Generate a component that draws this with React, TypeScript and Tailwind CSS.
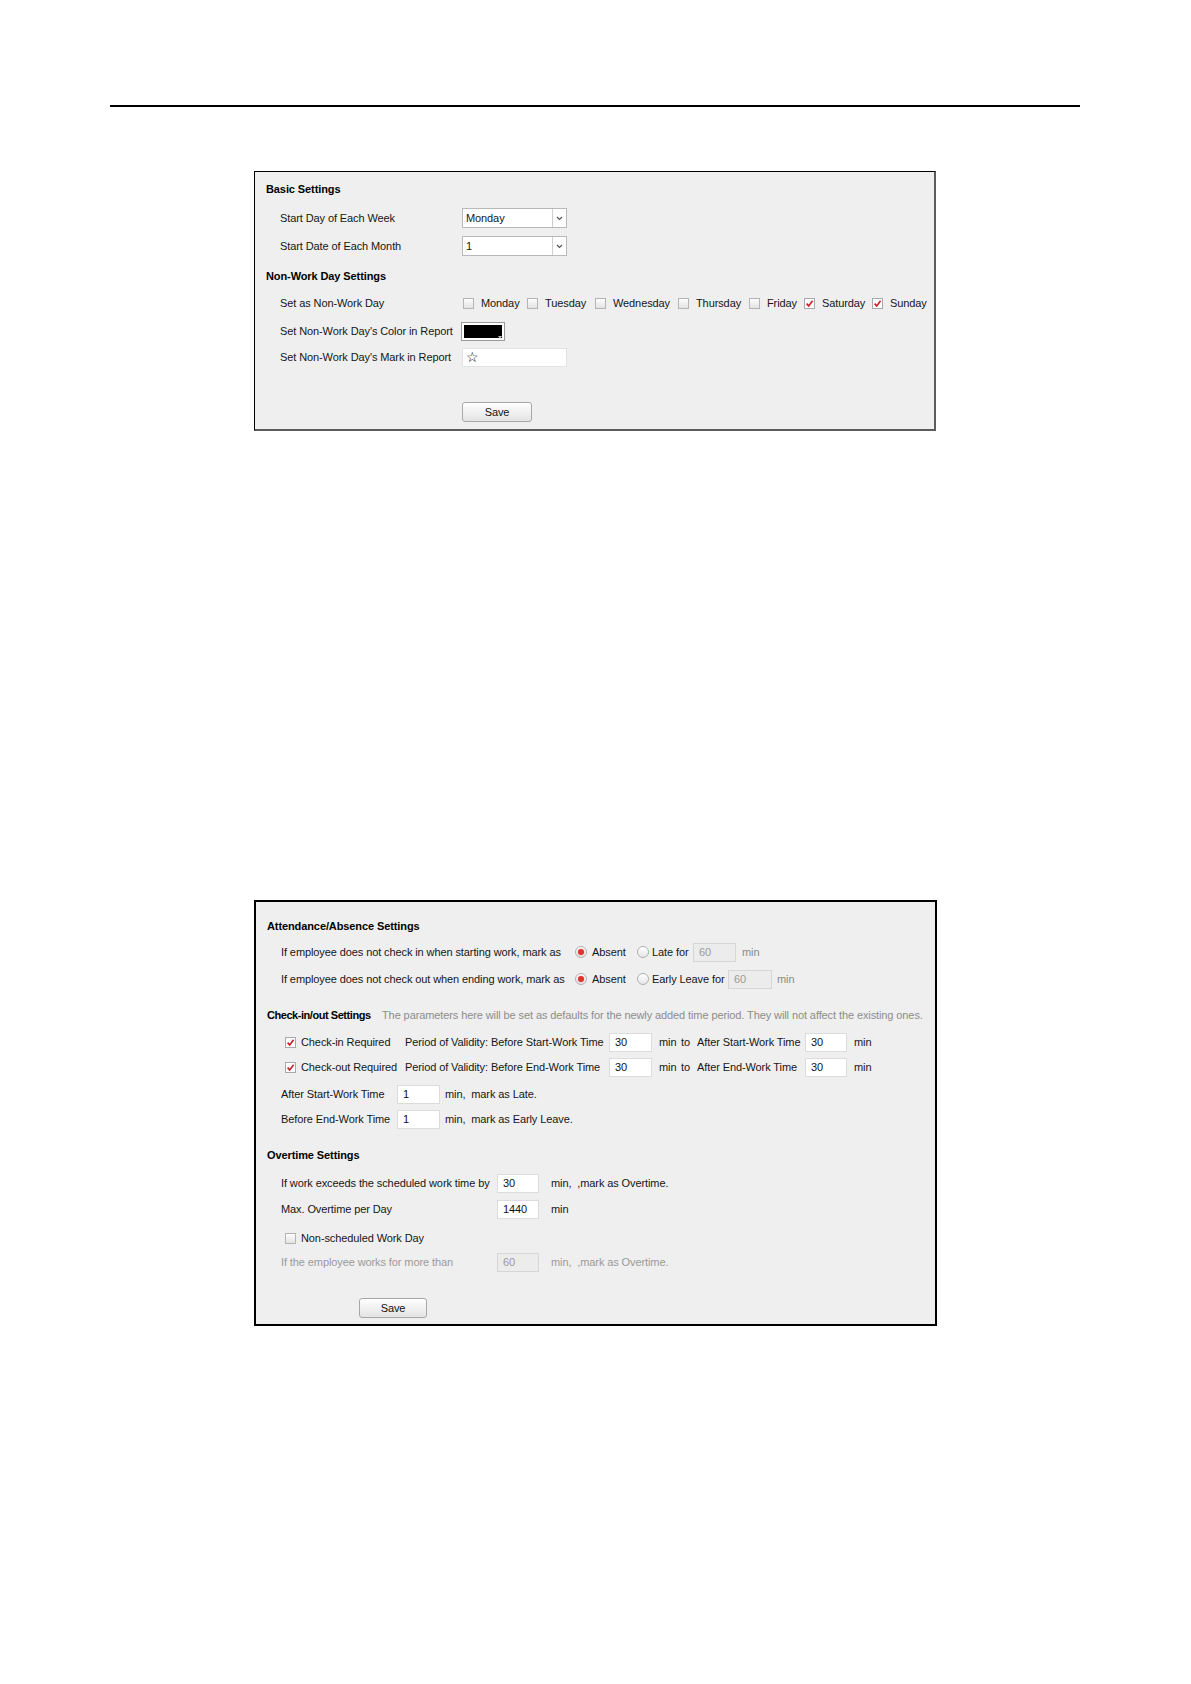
import React from 'react';

const Check: React.FC<{ checked?: boolean }> = ({ checked }) => (
    <span
        className={
            checked
                ? 'inline-flex items-center justify-center w-[11px] h-[11px] shrink-0 border border-[#a9a9a9] bg-white'
                : 'inline-flex items-center justify-center w-[11px] h-[11px] shrink-0 border border-[#b4b4b4] bg-linear-to-b from-[#fdfdfd] to-[#e3e3e3]'
        }
    >
        {checked && (
            <svg width="9" height="9" viewBox="0 0 9 9">
                <path d="M1.6 4.6 L3.7 6.9 L7.6 1.7" fill="none" stroke="#c8202a" strokeWidth="1.6" />
            </svg>
        )}
    </span>
);

const Radio: React.FC<{ checked?: boolean }> = ({ checked }) => (
    <span className="inline-flex items-center justify-center w-[12px] h-[12px] shrink-0 rounded-full border border-[#b0b0b0] bg-linear-to-b from-white to-[#e6e6e6]">
        {checked && <span className="w-[6px] h-[6px] rounded-full bg-[#e1322c] shadow-[0_0_2px_#f4a0a0]" />}
    </span>
);

const Field: React.FC<{ value: string; className: string; disabled?: boolean }> = ({ value, className, disabled }) => (
    <span
        className={
            (disabled
                ? 'bg-[#ececec] border-[#d6d6d6] text-[#9a9a9a] '
                : 'bg-white border-[#dcdcdc] text-[#111] ') +
            'inline-flex items-center h-[19px] pl-[5px] border shrink-0 ' +
            className
        }
    >
        {value}
    </span>
);

const Select: React.FC<{ value: string }> = ({ value }) => (
    <span className="inline-flex items-stretch w-[105px] h-[20px] bg-white border border-[#b9b9b9] shrink-0">
        <span className="flex-1 flex items-center pl-[3px]">{value}</span>
        <span className="w-[14px] flex items-center justify-center border-l border-[#cfcfcf]">
            <svg width="7" height="5" viewBox="0 0 7 5">
                <path d="M1 1 L3.5 3.5 L6 1" fill="none" stroke="#555" strokeWidth="1.2" />
            </svg>
        </span>
    </span>
);

const SaveButton: React.FC<{ className: string }> = ({ className }) => (
    <button
        className={
            'flex items-center justify-center h-[20px] rounded-[3px] border border-[#a8a8a8] bg-linear-to-b from-white to-[#e4e4e4] text-[11px] text-[#111] ' +
            className
        }
    >
        Save
    </button>
);

const Row: React.FC<{ className: string; children: React.ReactNode }> = ({ className, children }) => (
    <div className={'flex items-center h-[26px] whitespace-pre ' + className}>{children}</div>
);

const days = [
    { name: 'Monday', w: 'w-[64px]', checked: false },
    { name: 'Tuesday', w: 'w-[68px]', checked: false },
    { name: 'Wednesday', w: 'w-[83px]', checked: false },
    { name: 'Thursday', w: 'w-[71px]', checked: false },
    { name: 'Friday', w: 'w-[55px]', checked: false },
    { name: 'Saturday', w: 'w-[68px]', checked: true },
    { name: 'Sunday', w: 'w-[54px]', checked: true },
];

const BasicPanel = () => (
    <div className="ml-[254px] mt-[64px] w-[682px] h-[260px] bg-[#efefef] border-t border-l border-black border-r-2 border-b-2 border-r-[#5c5c5c] border-b-[#5c5c5c] pt-[4px]">
        <Row className="pl-[11px] font-bold text-black">Basic Settings</Row>
        <Row className="mt-[3px] pl-[25px]">
            <span className="w-[182px]">Start Day of Each Week</span>
            <Select value="Monday" />
        </Row>
        <Row className="mt-[2px] pl-[25px]">
            <span className="w-[182px]">Start Date of Each Month</span>
            <Select value="1" />
        </Row>
        <Row className="mt-[4px] pl-[11px] font-bold text-black">Non-Work Day Settings</Row>
        <Row className="mt-[1px] pl-[25px]">
            <span className="w-[183px]">Set as Non-Work Day</span>
            {days.map((d) => (
                <span key={d.name} className={'flex items-center ' + d.w}>
                    <Check checked={d.checked} />
                    <span className="ml-[7px]">{d.name}</span>
                </span>
            ))}
        </Row>
        <Row className="mt-[2px] pl-[25px]">
            <span className="w-[181px]">Set Non-Work Day's Color in Report</span>
            <span className="relative inline-flex w-[44px] h-[19px] p-[2px] bg-white border border-[#9a9a9a]">
                <span className="flex-1 bg-black" />
                <span className="absolute right-[2px] bottom-[1px] w-0 h-0 border-l-[2px] border-r-[2px] border-t-[3px] border-l-transparent border-r-transparent border-t-[#bbbbbb]" />
            </span>
        </Row>
        <Row className="pl-[25px]">
            <span className="w-[182px]">Set Non-Work Day's Mark in Report</span>
            <span className="inline-flex items-center w-[105px] h-[19px] pl-[3px] bg-white border border-[#e2e2e2] text-[14px] font-bold leading-none text-black font-['DejaVu_Sans',sans-serif]">
                ☆
            </span>
        </Row>
        <SaveButton className="mt-[32px] ml-[207px] w-[70px]" />
    </div>
);

const RulesPanel = () => (
    <div className="ml-[254px] mt-[469px] w-[683px] h-[426px] bg-[#efefef] border-2 border-black pt-[11px]">
        <Row className="pl-[11px] font-bold text-black">Attendance/Absence Settings</Row>
        <Row className="pl-[25px]">
            <span className="w-[294px]">If employee does not check in when starting work, mark as</span>
            <Radio checked />
            <span className="ml-[5px] w-[45px]">Absent</span>
            <Radio />
            <span className="ml-[3px] w-[41px]">Late for</span>
            <Field value="60" className="w-[43px]" disabled />
            <span className="ml-[6px] text-[#8a8a8a]">min</span>
        </Row>
        <Row className="mt-[1px] pl-[25px]">
            <span className="w-[294px]">If employee does not check out when ending work, mark as</span>
            <Radio checked />
            <span className="ml-[5px] w-[45px]">Absent</span>
            <Radio />
            <span className="ml-[3px] w-[76px]">Early Leave for</span>
            <Field value="60" className="w-[44px]" disabled />
            <span className="ml-[5px] text-[#8a8a8a]">min</span>
        </Row>
        <Row className="mt-[10px] pl-[11px]">
            <span className="w-[115px] font-bold text-black tracking-[-0.45px]">Check-in/out Settings</span>
            <span className="text-[#8c8c8c]">
                The parameters here will be set as defaults for the newly added time period. They will not affect the existing ones.
            </span>
        </Row>
        <Row className="mt-[1px] pl-[29px]">
            <Check checked />
            <span className="ml-[5px] w-[104px]">Check-in Required</span>
            <span className="w-[86px]">Period of Validity:</span>
            <span className="w-[118px]">Before Start-Work Time</span>
            <Field value="30" className="w-[43px]" />
            <span className="ml-[7px] w-[22px]">min</span>
            <span className="w-[16px]">to</span>
            <span className="w-[108px]">After Start-Work Time</span>
            <Field value="30" className="w-[42px]" />
            <span className="ml-[7px]">min</span>
        </Row>
        <Row className="-mt-px pl-[29px]">
            <Check checked />
            <span className="ml-[5px] w-[104px]">Check-out Required</span>
            <span className="w-[86px]">Period of Validity:</span>
            <span className="w-[118px]">Before End-Work Time</span>
            <Field value="30" className="w-[43px]" />
            <span className="ml-[7px] w-[22px]">min</span>
            <span className="w-[16px]">to</span>
            <span className="w-[108px]">After End-Work Time</span>
            <Field value="30" className="w-[42px]" />
            <span className="ml-[7px]">min</span>
        </Row>
        <Row className="mt-[1px] pl-[25px]">
            <span className="w-[116px]">After Start-Work Time</span>
            <Field value="1" className="w-[43px]" />
            <span className="ml-[5px]">min,  mark as Late.</span>
        </Row>
        <Row className="-mt-px pl-[25px]">
            <span className="w-[116px]">Before End-Work Time</span>
            <Field value="1" className="w-[43px]" />
            <span className="ml-[5px]">min,  mark as Early Leave.</span>
        </Row>
        <Row className="mt-[10px] pl-[11px] font-bold text-black">Overtime Settings</Row>
        <Row className="mt-[2px] pl-[25px]">
            <span className="w-[216px]">If work exceeds the scheduled work time by</span>
            <Field value="30" className="w-[42px]" />
            <span className="ml-[12px]">min,  ,mark as Overtime.</span>
        </Row>
        <Row className="pl-[25px]">
            <span className="w-[216px]">Max. Overtime per Day</span>
            <Field value="1440" className="w-[42px]" />
            <span className="ml-[12px]">min</span>
        </Row>
        <Row className="mt-[3px] pl-[29px]">
            <Check />
            <span className="ml-[5px]">Non-scheduled Work Day</span>
        </Row>
        <Row className="-mt-[2px] pl-[25px] text-[#9a9a9a]">
            <span className="w-[216px]">If the employee works for more than</span>
            <Field value="60" className="w-[42px]" disabled />
            <span className="ml-[12px]">min,  ,mark as Overtime.</span>
        </Row>
        <SaveButton className="mt-[23px] ml-[103px] w-[68px]" />
    </div>
);

export default function App() {
    return (
        <div className="w-[1191px] h-[1684px] overflow-hidden bg-white text-[11px] text-[#161616] tracking-[-0.1px] font-['Liberation_Sans',Arial,sans-serif]">
            <div className="pt-[105px] pl-[110px]">
                <div className="w-[970px] h-[2px] bg-black" />
            </div>
            <BasicPanel />
            <RulesPanel />
        </div>
    );
}
